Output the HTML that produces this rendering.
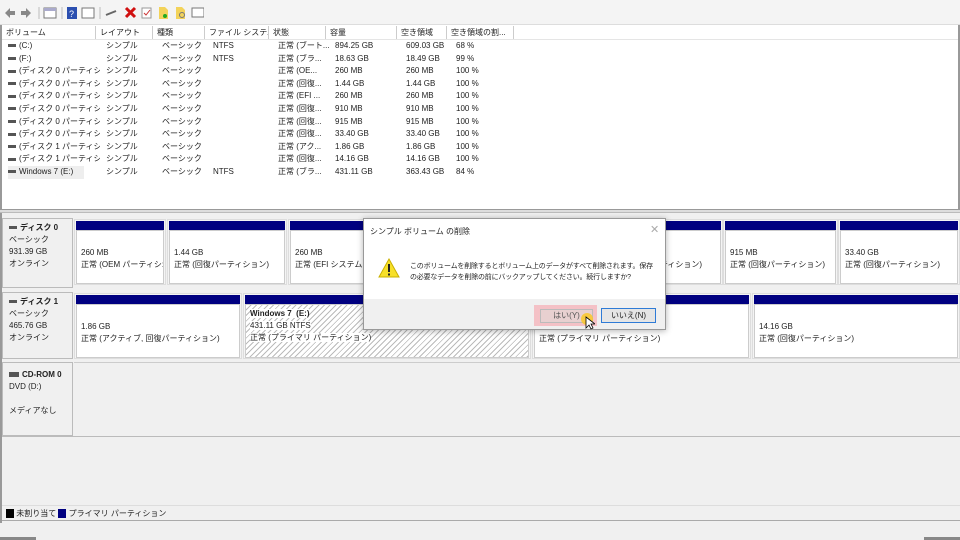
<!DOCTYPE html>
<html><head><meta charset="utf-8"><style>
*{margin:0;padding:0;box-sizing:border-box}
body{width:960px;height:540px;overflow:hidden;background:#f0f0f0;font-family:"Liberation Sans","Noto Sans CJK JP",sans-serif;font-size:8px;color:#222;position:relative}
.a{position:absolute;white-space:nowrap}
#tb{left:0;top:0;width:960px;height:25px;background:#f4f4f4;border-bottom:1px solid #ddd}
#list{left:0;top:25px;width:960px;height:185px;background:#fff;border-left:2px solid #999;border-right:2px solid #999}
.hd{top:26px;height:13px;border-right:1px solid #ccc;padding-left:4px;line-height:13px;background:#fff;overflow:hidden}
.row{left:4px;width:520px;height:12.6px;line-height:12.6px}
.row span{position:absolute;overflow:hidden}
.row span:nth-child(1){width:92px}
.ic{display:inline-block;width:8px;height:3px;background:#555;vertical-align:middle;margin-right:3px}
#split{left:0;top:209px;width:960px;height:4px;background:#ddd;border-top:1px solid #999;border-bottom:1px solid #bbb}
.lbl{left:2px;width:71px;background:#f0f0f0;border:1px solid #bbb;padding:3px 0 0 6px;line-height:12px}
.bar{background:#000080;height:9px}
.box{background:#fff;border:1px solid #ccc;padding:16px 0 0 4px;line-height:12px;overflow:hidden;white-space:nowrap}
.part{position:absolute;border:1px solid #ddd;background:#f4f4f4;padding:1px}
.hatch{background:repeating-linear-gradient(135deg,#fff 0 3px,#bbb 3px 4px)}
</style></head><body>
<div class="a" id="tb">
<svg class="a" style="left:4px;top:6px" width="200" height="14">
<path d="M1 7l5-5v3h5v4H6v3z" fill="#888"/><path d="M27 7l-5-5v3h-5v4h5v3z" fill="#888"/>
<line x1="35" y1="1" x2="35" y2="13" stroke="#bbb"/>
<rect x="40" y="2" width="12" height="10" fill="#fff" stroke="#777"/><rect x="40" y="2" width="12" height="3" fill="#aac"/>
<line x1="58" y1="1" x2="58" y2="13" stroke="#bbb"/>
<rect x="63" y="1" width="10" height="12" fill="#2b4fb0"/><text x="65" y="11" fill="#fff" font-size="9" font-family="Liberation Sans">?</text>
<rect x="78" y="2" width="12" height="10" fill="#fff" stroke="#777"/>
<line x1="96" y1="1" x2="96" y2="13" stroke="#bbb"/>
<path d="M102 9l10-4" stroke="#666" stroke-width="2"/>
<path d="M122 2l9 9M131 2l-9 9" stroke="#d01010" stroke-width="3"/>
<rect x="138" y="2" width="9" height="10" fill="#fff" stroke="#999"/><path d="M140 7l2 2 4-5" stroke="#c33" fill="none"/>
<path d="M155 1h6l3 3v9h-9z" fill="#f3d35a"/><circle cx="161" cy="10" r="2" fill="#2a2"/>
<path d="M172 1h6l3 3v9h-9z" fill="#f3d35a"/><circle cx="178" cy="9" r="2.5" fill="none" stroke="#777"/>
<rect x="188" y="2" width="12" height="9" fill="#fff" stroke="#777"/>
</svg></div>
<div class="a" id="list"></div>
<div class="a hd" style="left:2px;width:94px">ボリューム</div>
<div class="a hd" style="left:96px;width:57px">レイアウト</div>
<div class="a hd" style="left:153px;width:52px">種類</div>
<div class="a hd" style="left:205px;width:64px">ファイル システム</div>
<div class="a hd" style="left:269px;width:57px">状態</div>
<div class="a hd" style="left:326px;width:71px">容量</div>
<div class="a hd" style="left:397px;width:50px">空き領域</div>
<div class="a hd" style="left:447px;width:67px">空き領域の割...</div>
<div class="a" style="left:2px;top:39px;width:956px;height:1px;background:#e5e5e5"></div>
<div class="a" style="left:4px;top:40px;width:520px">
<div class="a row" style="top:0"><span><i class="ic"></i>(C:)</span><span style="left:98px">シンプル</span><span style="left:154px">ベーシック</span><span style="left:205px">NTFS</span><span style="left:270px">正常 (ブート...</span><span style="left:327px">894.25 GB</span><span style="left:398px">609.03 GB</span><span style="left:448px">68 %</span></div>
<div class="a row" style="top:12.6px"><span><i class="ic"></i>(F:)</span><span style="left:98px">シンプル</span><span style="left:154px">ベーシック</span><span style="left:205px">NTFS</span><span style="left:270px">正常 (ブラ...</span><span style="left:327px">18.63 GB</span><span style="left:398px">18.49 GB</span><span style="left:448px">99 %</span></div>
<div class="a row" style="top:25.2px"><span><i class="ic"></i>(ディスク 0 パーティシ...</span><span style="left:98px">シンプル</span><span style="left:154px">ベーシック</span><span style="left:270px">正常 (OE...</span><span style="left:327px">260 MB</span><span style="left:398px">260 MB</span><span style="left:448px">100 %</span></div>
<div class="a row" style="top:37.8px"><span><i class="ic"></i>(ディスク 0 パーティシ...</span><span style="left:98px">シンプル</span><span style="left:154px">ベーシック</span><span style="left:270px">正常 (回復...</span><span style="left:327px">1.44 GB</span><span style="left:398px">1.44 GB</span><span style="left:448px">100 %</span></div>
<div class="a row" style="top:50.4px"><span><i class="ic"></i>(ディスク 0 パーティシ...</span><span style="left:98px">シンプル</span><span style="left:154px">ベーシック</span><span style="left:270px">正常 (EFI ...</span><span style="left:327px">260 MB</span><span style="left:398px">260 MB</span><span style="left:448px">100 %</span></div>
<div class="a row" style="top:63px"><span><i class="ic"></i>(ディスク 0 パーティシ...</span><span style="left:98px">シンプル</span><span style="left:154px">ベーシック</span><span style="left:270px">正常 (回復...</span><span style="left:327px">910 MB</span><span style="left:398px">910 MB</span><span style="left:448px">100 %</span></div>
<div class="a row" style="top:75.6px"><span><i class="ic"></i>(ディスク 0 パーティシ...</span><span style="left:98px">シンプル</span><span style="left:154px">ベーシック</span><span style="left:270px">正常 (回復...</span><span style="left:327px">915 MB</span><span style="left:398px">915 MB</span><span style="left:448px">100 %</span></div>
<div class="a row" style="top:88.2px"><span><i class="ic"></i>(ディスク 0 パーティシ...</span><span style="left:98px">シンプル</span><span style="left:154px">ベーシック</span><span style="left:270px">正常 (回復...</span><span style="left:327px">33.40 GB</span><span style="left:398px">33.40 GB</span><span style="left:448px">100 %</span></div>
<div class="a row" style="top:100.8px"><span><i class="ic"></i>(ディスク 1 パーティシ...</span><span style="left:98px">シンプル</span><span style="left:154px">ベーシック</span><span style="left:270px">正常 (アク...</span><span style="left:327px">1.86 GB</span><span style="left:398px">1.86 GB</span><span style="left:448px">100 %</span></div>
<div class="a row" style="top:113.4px"><span><i class="ic"></i>(ディスク 1 パーティシ...</span><span style="left:98px">シンプル</span><span style="left:154px">ベーシック</span><span style="left:270px">正常 (回復...</span><span style="left:327px">14.16 GB</span><span style="left:398px">14.16 GB</span><span style="left:448px">100 %</span></div>
<div class="a row" style="top:126px"><span style="background:#eee;width:76px"><i class="ic"></i>Windows 7 (E:)</span><span style="left:98px">シンプル</span><span style="left:154px">ベーシック</span><span style="left:205px">NTFS</span><span style="left:270px">正常 (ブラ...</span><span style="left:327px">431.11 GB</span><span style="left:398px">363.43 GB</span><span style="left:448px">84 %</span></div>
</div>
<div class="a" id="split"></div>
<div class="a" style="left:0;top:213px;width:2px;height:310px;background:#999"></div>
<!-- disk 0 -->
<div class="a lbl" style="top:218px;height:70px"><b><i class="ic"></i>ディスク 0</b><br>ベーシック<br>931.39 GB<br>オンライン</div>
<div class="part" style="left:74px;top:219px;width:92px;height:66px"><div class="bar"></div><div class="box" style="height:54px">260 MB<br>正常 (OEM パーティシ:</div></div>
<div class="part" style="left:167px;top:219px;width:120px;height:66px"><div class="bar"></div><div class="box" style="height:54px">1.44 GB<br>正常 (回復パーティション)</div></div>
<div class="part" style="left:288px;top:219px;width:150px;height:66px"><div class="bar"></div><div class="box" style="height:54px">260 MB<br>正常 (EFI システム パーティション)</div></div>
<div class="part" style="left:600px;top:219px;width:123px;height:66px"><div class="bar"></div><div class="box" style="height:54px">910 MB<br>正常 (回復パーティション)</div></div>
<div class="part" style="left:723px;top:219px;width:115px;height:66px"><div class="bar"></div><div class="box" style="height:54px">915 MB<br>正常 (回復パーティション)</div></div>
<div class="part" style="left:838px;top:219px;width:122px;height:66px"><div class="bar"></div><div class="box" style="height:54px">33.40 GB<br>正常 (回復パーティション)</div></div>
<!-- disk 1 -->
<div class="a lbl" style="top:292px;height:67px"><b><i class="ic"></i>ディスク 1</b><br>ベーシック<br>465.76 GB<br>オンライン</div>
<div class="part" style="left:74px;top:293px;width:168px;height:66px"><div class="bar"></div><div class="box" style="height:54px;padding-top:16px">1.86 GB<br>正常 (アクティブ, 回復パーティション)</div></div>
<div class="part" style="left:243px;top:293px;width:288px;height:66px"><div class="bar"></div><div class="box hatch" style="height:54px;padding-top:3px"><b style="background:#fff">Windows 7 &nbsp;(E:)</b><br><span style="background:#fff">431.11 GB NTFS</span><br><span style="background:#fff">正常 (プライマリ パーティション)</span></div></div>
<div class="part" style="left:532px;top:293px;width:219px;height:66px"><div class="bar"></div><div class="box" style="height:54px;padding-top:28px">正常 (プライマリ パーティション)</div></div>
<div class="part" style="left:752px;top:293px;width:208px;height:66px"><div class="bar"></div><div class="box" style="height:54px">14.16 GB<br>正常 (回復パーティション)</div></div>
<!-- cdrom -->
<div class="a lbl" style="top:362px;height:74px;padding-top:6px"><b><i class="ic" style="width:10px;height:5px"></i>CD-ROM 0</b><br>DVD (D:)<br><br>メディアなし</div>
<div class="a" style="left:74px;top:362px;width:886px;height:1px;background:#ccc"></div>
<div class="a" style="left:2px;top:436px;width:958px;height:1px;background:#bbb"></div>
<!-- legend -->
<div class="a" style="left:2px;top:505px;width:958px;height:16px;border-top:1px solid #ddd;border-bottom:1px solid #aaa;line-height:15px;padding-left:4px"><i style="display:inline-block;width:8px;height:9px;background:#000;vertical-align:middle"></i> 未割り当て <i style="display:inline-block;width:8px;height:9px;background:#000080;vertical-align:middle"></i> プライマリ パーティション</div>
<div class="a" style="left:0;top:537px;width:36px;height:3px;background:#888"></div>
<div class="a" style="left:924px;top:537px;width:36px;height:3px;background:#888"></div>
<!-- dialog -->
<div class="a" style="left:363px;top:218px;width:303px;height:112px;background:#f0f0f0;border:1px solid #999;box-shadow:0 1px 6px rgba(0,0,0,.3)">
<div class="a" style="left:0;top:0;width:301px;height:80px;background:#fff"></div>
<div class="a" style="left:6px;top:7px;font-size:8px">シンプル ボリューム の削除</div>
<div class="a" style="left:286px;top:4px;color:#aaa;font-size:11px">✕</div>
<svg class="a" style="left:14px;top:39px" width="22" height="20"><path d="M11 1L21 19H1z" fill="#f7e02a" stroke="#c9b000"/><rect x="10" y="6" width="2" height="8" fill="#222"/><rect x="10" y="15.5" width="2" height="2" fill="#222"/></svg>
<div class="a" style="left:46px;top:42px;font-size:7px;line-height:11px;letter-spacing:-0.2px">このボリュームを削除するとボリューム上のデータがすべて削除されます。保存<br>の必要なデータを削除の前にバックアップしてください。続行しますか?</div>
<div class="a" style="left:170px;top:86px;width:63px;height:21px;background:#f4c1c6"></div>
<div class="a" style="left:176px;top:90px;width:53px;height:14px;border:1px solid #bbb;background:#e8d0d0;text-align:center;line-height:12px;font-size:8px;color:#555">はい(Y)</div>
<div class="a" style="left:237px;top:89px;width:55px;height:15px;border:1px solid #2f7bd6;background:#e5e5e5;text-align:center;line-height:13px;font-size:8px">いいえ(N)</div>
<div class="a" style="left:217px;top:94px;width:12px;height:12px;border-radius:50%;background:rgba(250,200,40,.85)"></div>
<svg class="a" style="left:221px;top:97px" width="10" height="14"><path d="M1 1v11l3-3 2 4 2-1-2-4h4z" fill="#fff" stroke="#000" stroke-width=".8"/></svg>
</div>
</body></html>
